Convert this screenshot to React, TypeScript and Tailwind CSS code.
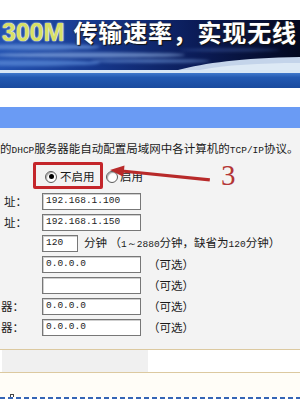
import React from "react";

const cjk = "font-['Noto_Sans_CJK_SC',sans-serif]";
const mono = "font-['Liberation_Mono',monospace]";

function Field({ value, w }: { value: string; w: string }) {
  return (
    <div
      className={`h-[17px] ${w} shrink-0 border border-[#777] bg-white shadow-[inset_1px_1px_0_#cfcfcf] flex items-center pl-[3px] ${mono} text-[9.5px] text-[#222]`}
    >
      {value}
    </div>
  );
}

function Radio({ checked }: { checked?: boolean }) {
  return (
    <span className="w-[12px] h-[12px] shrink-0 rounded-full border border-[#5c5c5c] bg-white shadow-[inset_1px_1px_1px_#aaa] flex items-center justify-center">
      {checked && <span className="w-[5px] h-[5px] rounded-full bg-black" />}
    </span>
  );
}

function Row({ label, pr, children }: { label?: string; pr?: string; children: React.ReactNode }) {
  return (
    <div className="flex items-center h-[17px]">
      <div className={`w-[42px] shrink-0 flex justify-end ${pr ?? ""}`}>
        {label && <span className="whitespace-nowrap">{label}</span>}
      </div>
      {children}
    </div>
  );
}

function Optional() {
  return <span className="ml-[7px] whitespace-nowrap">（可选）</span>;
}

function Banner() {
  return (
    <div className="grid h-[68px]">
      <svg className="col-start-1 row-start-1" width="300" height="68" viewBox="0 0 300 68">
        <defs>
          <linearGradient id="bgH" x1="0" x2="1" y1="0" y2="0">
            <stop offset="0" stopColor="#2352b0" />
            <stop offset="0.3" stopColor="#16398f" />
            <stop offset="0.65" stopColor="#0b1c58" />
            <stop offset="1" stopColor="#03081e" />
          </linearGradient>
          <linearGradient id="band" x1="0" y1="0" x2="0" y2="1">
            <stop offset="0" stopColor="#3f78cc" />
            <stop offset="0.3" stopColor="#2259b2" />
            <stop offset="1" stopColor="#1a4a9e" />
          </linearGradient>
          <filter id="blur">
            <feGaussianBlur stdDeviation="1.6" />
          </filter>
        </defs>
        <rect width="300" height="50" fill="url(#bgH)" />
        <g filter="url(#blur)">
          <ellipse cx="40" cy="27" rx="60" ry="3" fill="#6d9ae0" opacity="0.7" />
          <ellipse cx="90" cy="35" rx="95" ry="2.5" fill="#9bbcef" opacity="0.6" />
          <ellipse cx="30" cy="43" rx="70" ry="3" fill="#5a88d6" opacity="0.75" />
          <ellipse cx="150" cy="41" rx="60" ry="2" fill="#7aa3e6" opacity="0.5" />
          <ellipse cx="230" cy="30" rx="50" ry="1.5" fill="#4a6fb8" opacity="0.4" />
        </g>
        <path d="M178 50 C205 43 240 38 300 37 L300 50 Z" fill="#c4d4ea" />
        <path d="M200 50 C225 45 260 43 300 43 L300 50 Z" fill="#e4edf7" opacity="0.8" />
        <rect y="50" width="300" height="3" fill="#d8e6f5" />
        <rect y="53" width="300" height="15" fill="url(#band)" />
      </svg>
      <div className="col-start-1 row-start-1 flex items-start pl-[2px] -mt-[3px]">
        <span className="font-['Liberation_Sans',sans-serif] font-bold text-[25px] leading-[30px] text-[#d6e066] [text-shadow:0_0_2px_#fff,0_0_1px_#fff]">
          300M
        </span>
        <span
          className={`ml-[9px] ${cjk} font-bold text-[24px] leading-[30px] tracking-[0.8px] text-white [text-shadow:1px_1px_1px_#111,-1px_0_1px_#333]`}
        >
          传输速率，实现无线
        </span>
      </div>
    </div>
  );
}

export default function App() {
  return (
    <div className={`w-[300px] h-[400px] overflow-hidden bg-white flex flex-col ${cjk} text-[11.5px] text-[#1a1a1a]`}>
      <div className="h-[20px] shrink-0" />
      <Banner />
      <div className="h-[19px] shrink-0" />
      <div className="h-[21px] shrink-0 bg-[#6a9bf4]" />

      <div className="h-[221px] shrink-0 bg-[#f3f3f3] flex flex-col pt-[12px]">
        <p className="h-[16px] leading-[16px] whitespace-nowrap text-[11.5px]">
          的<span className={`${mono} text-[9.5px]`}>DHCP</span>服务器能自动配置局域网中各计算机的
          <span className={`${mono} text-[9.5px]`}>TCP/IP</span>协议。
        </p>

        <div className="relative mt-[6px] h-[27px] flex items-center pl-[33px]">
          <div className="h-[27px] w-[70px] border-[3px] border-[#c4262b] rounded-[2px] flex items-center gap-[3px] pl-[9px] pt-[2px]">
            <Radio checked />
            <span>不启用</span>
          </div>
          <div className="flex items-center gap-[2px] ml-[3px] pt-[2px]">
            <Radio />
            <span>启用</span>
          </div>
          <span className="ml-[78px] font-['Liberation_Serif',serif] text-[29px] leading-[27px] text-[#b43636]">3</span>
          <svg className="absolute left-0 top-0 pointer-events-none" width="300" height="27" viewBox="0 0 300 27">
            <polygon points="122,7.6 210,16.2 209.6,19.4 121.6,10.6" fill="#b82a2a" />
            <polygon points="110,8 124.5,3.4 123.3,14.8" fill="#b82a2a" />
          </svg>
        </div>

        <div className="mt-[4px] flex flex-col gap-[4px]">
          <Row label="址：" pr="pr-[15px]">
            <Field value="192.168.1.100" w="w-[99px]" />
          </Row>
          <Row label="址：" pr="pr-[15px]">
            <Field value="192.168.1.150" w="w-[99px]" />
          </Row>
          <Row>
            <Field value="120" w="w-[36px]" />
            <span className="ml-[6px] whitespace-nowrap">
              分钟 （<span className={`${mono} text-[9.5px]`}>1～2880</span>分钟，缺省为
              <span className={`${mono} text-[9.5px]`}>120</span>分钟）
            </span>
          </Row>
          <Row>
            <Field value="0.0.0.0" w="w-[99px]" />
            <Optional />
          </Row>
          <Row>
            <Field value="" w="w-[99px]" />
            <Optional />
          </Row>
          <Row label="器：" pr="pr-[18px]">
            <Field value="0.0.0.0" w="w-[99px]" />
            <Optional />
          </Row>
          <Row label="器：" pr="pr-[18px]">
            <Field value="0.0.0.0" w="w-[99px]" />
            <Optional />
          </Row>
        </div>
      </div>

      <div className="h-[1px] shrink-0 bg-[#dcc9a0]" />
      <div className="h-[22px] shrink-0 flex">
        <div className="w-[2px] bg-white" />
        <div className="w-[146px] bg-[#f0f0f0]" />
        <div className="flex-1 bg-white" />
      </div>
      <div className="h-[1px] shrink-0 bg-[#dcc9a0]" />
      <div className="h-[24px] shrink-0 bg-[#fffdf7] flex items-end pl-[10px]">
        <div className="w-[4px] h-[3px] border border-b-0 border-[#444] bg-white" />
      </div>
      <div className="h-[2px] shrink-0 bg-[repeating-linear-gradient(to_right,#3565b5_0px,#3565b5_5px,transparent_5px,transparent_8px)]" />
      <div className="h-[1px] shrink-0 bg-white" />
    </div>
  );
}
